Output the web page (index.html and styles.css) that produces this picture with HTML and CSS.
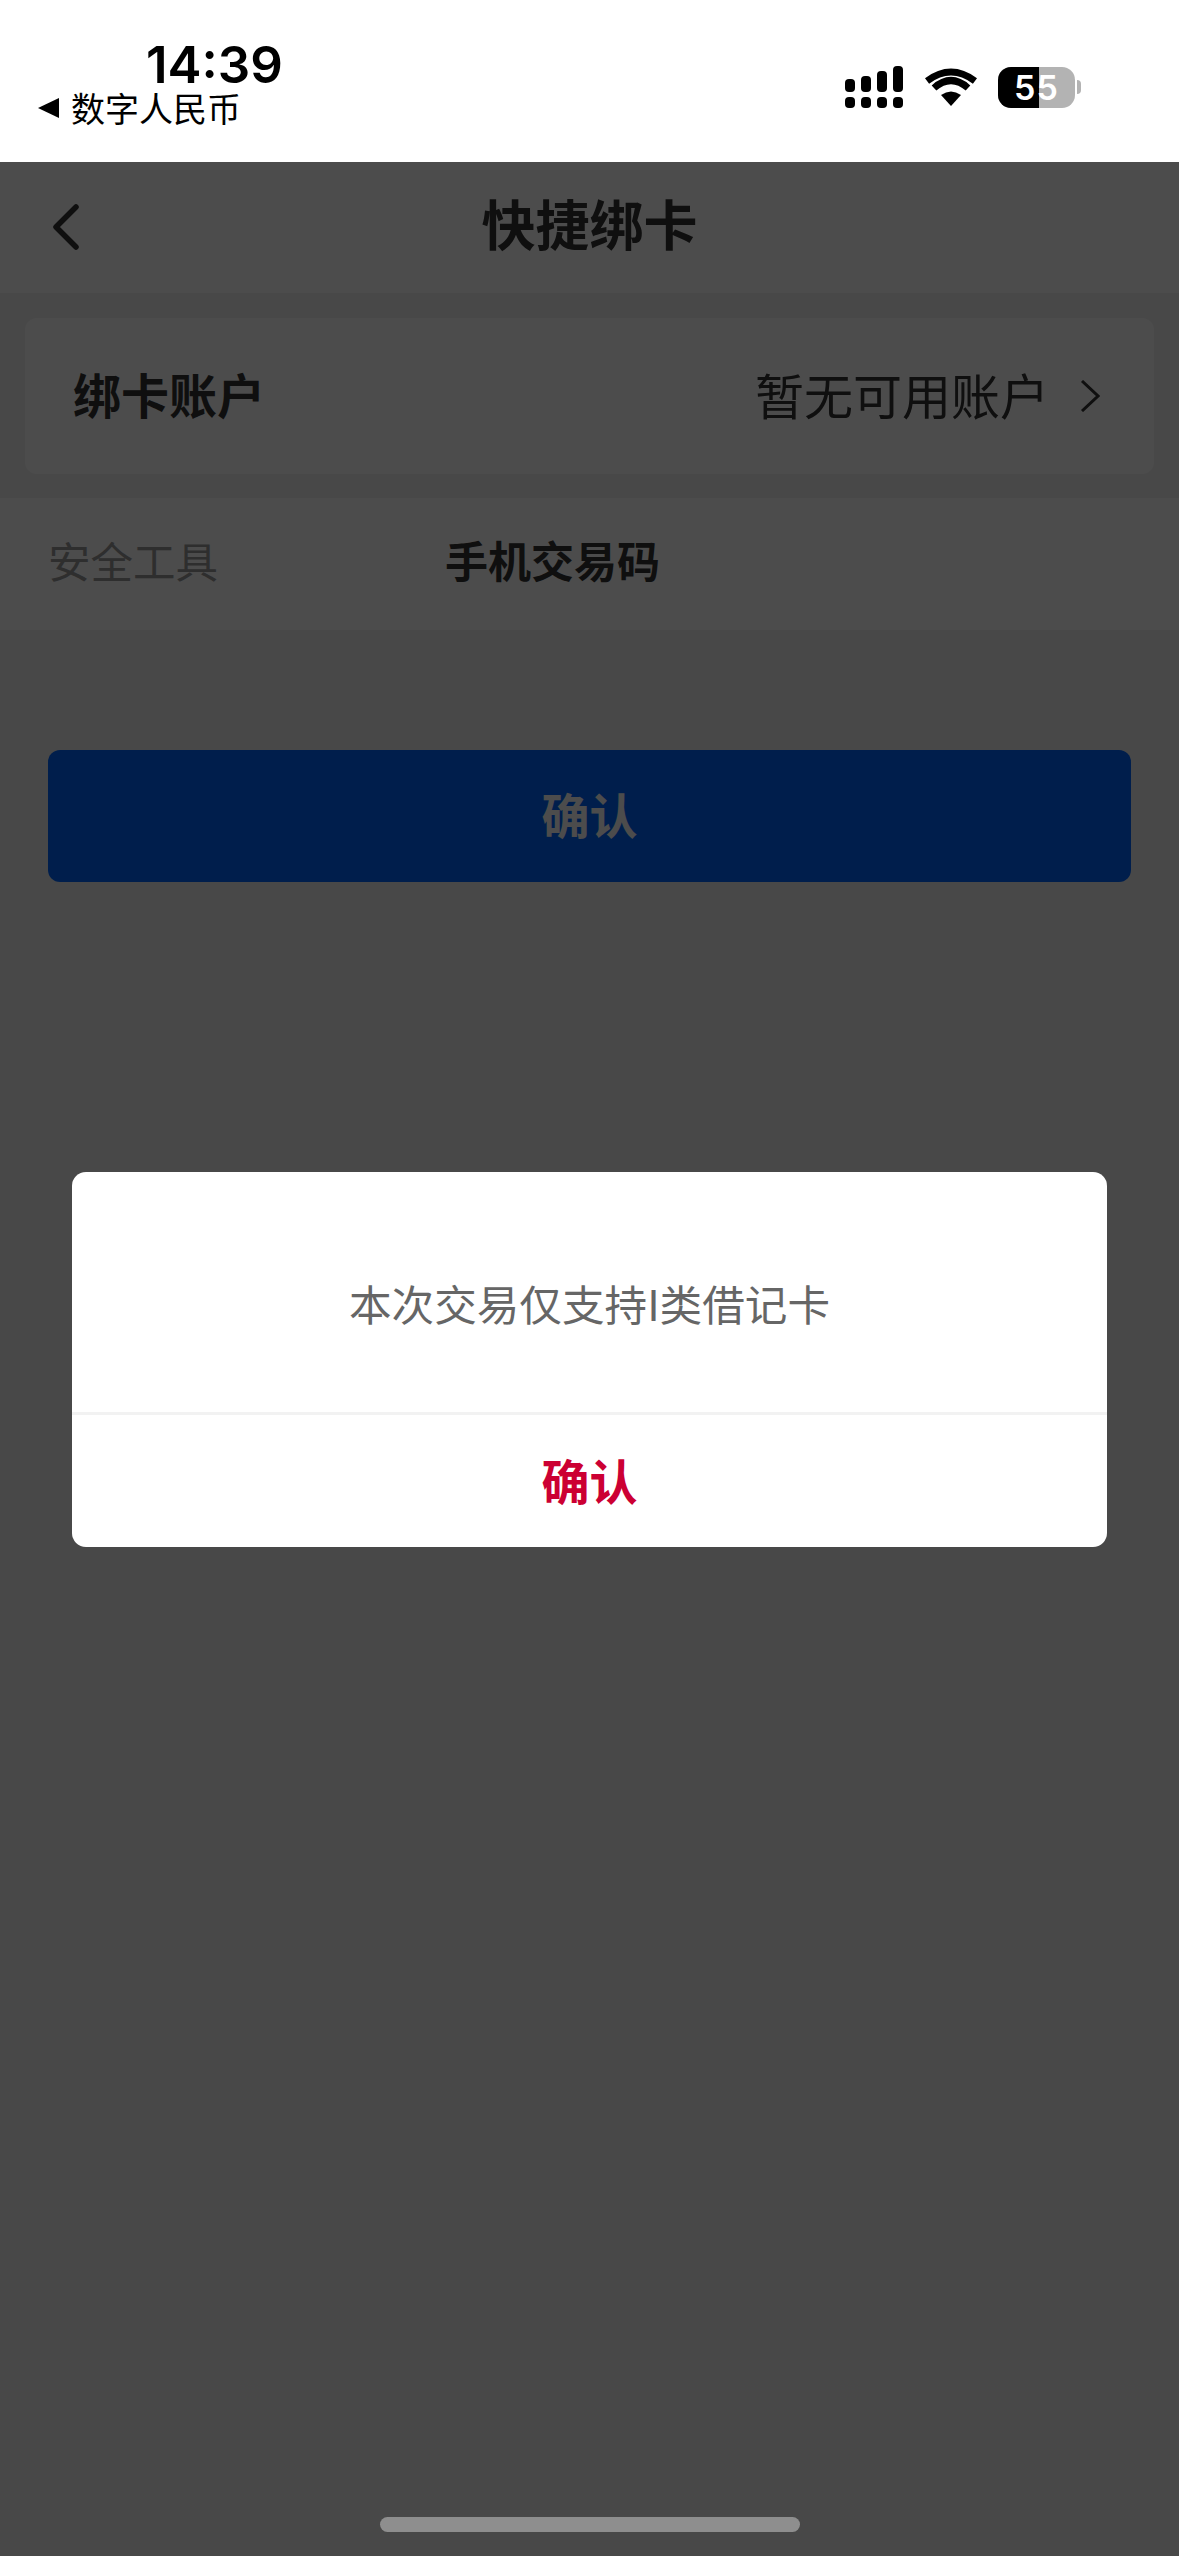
FILE: index.html
```html
<!DOCTYPE html>
<html lang="zh-CN">
<head>
    <meta charset="UTF-8">
    <meta name="viewport" content="width=device-width, initial-scale=1.0">
    <title>快捷绑卡</title>
    <link rel="stylesheet" href="styles.css">
</head>
<body>
    <div class="status-bar">
        <div class="status-left">
            <div class="time">14:39</div>
            <div class="back-app"><span class="back-tri"></span>数字人民币</div>
        </div>
        <div class="status-right">
            <svg class="signal" width="58" height="42" viewBox="0 0 58 42">
                <rect x="0" y="13" width="10" height="13" rx="4"/>
                <rect x="16" y="10" width="10" height="16" rx="4"/>
                <rect x="32" y="5" width="10" height="21" rx="4"/>
                <rect x="48" y="0" width="10" height="26" rx="4"/>
                <rect x="0" y="31" width="10" height="11" rx="4"/>
                <rect x="16" y="31" width="10" height="11" rx="4"/>
                <rect x="32" y="31" width="10" height="11" rx="4"/>
                <rect x="48" y="31" width="10" height="11" rx="4"/>
            </svg>
            <svg class="wifi" width="52" height="38" viewBox="0 0 52 38">
                <path d="M26 38 L16 27 Q26 20 36 27 Z"/>
                <path d="M9 20 Q26 5 43 20" fill="none" stroke="#000" stroke-width="7"/>
                <path d="M2 11 Q26 -7 50 11" fill="none" stroke="#000" stroke-width="7" transform="translate(0 2)"/>
            </svg>
            <div class="battery">
                <div class="battery-body">
                    <span class="battery-fill"></span>
                    <span class="battery-num">55</span>
                </div>
                <span class="battery-nub"></span>
            </div>
        </div>
    </div>

    <div class="page">
        <div class="nav">
            <svg class="nav-back" width="26" height="46" viewBox="0 0 26 46">
                <path d="M23 3 L3 23 L23 43" fill="none" stroke="#333" stroke-width="5.5" stroke-linecap="round" stroke-linejoin="round"/>
            </svg>
            <h1>快捷绑卡</h1>
        </div>
        <div class="section">
            <div class="card">
                <span class="card-label">绑卡账户</span>
                <span class="card-value">暂无可用账户</span>
                <svg class="chevron" width="20" height="32" viewBox="0 0 20 32">
                    <path d="M2 1 L18 16 L2 31" fill="none" stroke="#333" stroke-width="3"/>
                </svg>
            </div>
        </div>
        <div class="tool-row">
            <span class="tool-label">安全工具</span>
            <span class="tool-value">手机交易码</span>
        </div>
        <button class="confirm-btn">确认</button>
    </div>

    <div class="overlay">
        <div class="dialog">
            <div class="dialog-msg">本次交易仅支持I类借记卡</div>
            <div class="dialog-btn">确认</div>
        </div>
    </div>
    <div class="home-bar"></div>
</body>
</html>
```

FILE: styles.css
```css
* {
    box-sizing: border-box;
}
html, body {
    margin: 0;
    padding: 0;
}
body {
    width: 1179px;
    height: 2556px;
    overflow: hidden;
    position: relative;
    background-color: #f2f2f2;
    font-family: "Noto Sans CJK SC", "Noto Sans", sans-serif;
}

/* status bar */
.status-bar {
    height: 162px;
    background-color: #fff;
    display: flex;
    justify-content: space-between;
    padding: 37px 98px 0 38px;
    color: #000;
}
.time {
    font-family: Inter, sans-serif;
    font-size: 51px;
    font-weight: 600;
    line-height: 46px;
    padding-top: 5px;
    margin-left: 108px;
}
.back-app {
    display: flex;
    align-items: center;
    font-size: 34px;
    line-height: 40px;
}
.back-tri {
    width: 0;
    height: 0;
    border-top: 10px solid transparent;
    border-bottom: 10px solid transparent;
    border-right: 21px solid #000;
    margin-right: 12px;
}
.status-right {
    display: flex;
    align-items: center;
    height: 100px;
}
.signal {
    margin-right: 22px;
}
.wifi {
    margin-right: 21px;
}
.battery {
    display: flex;
    align-items: center;
}
.battery-body {
    position: relative;
    width: 77px;
    height: 41px;
    border-radius: 13px;
    background-color: #b3b3b3;
    overflow: hidden;
}
.battery-fill {
    position: absolute;
    left: 0;
    top: 0;
    bottom: 0;
    width: 41px;
    background-color: #000;
}
.battery-num {
    position: absolute;
    left: 0;
    right: 0;
    top: 0;
    text-align: center;
    font-family: Inter, sans-serif;
    font-size: 34px;
    font-weight: 600;
    line-height: 41px;
    color: #fff;
    letter-spacing: 1px;
}
.battery-nub {
    width: 4px;
    height: 14px;
    margin-left: 2px;
    background-color: #b3b3b3;
    border-radius: 0 4px 4px 0;
}

/* page under the dimmer */
.nav {
    position: relative;
    height: 131px;
    background-color: #fff;
    display: flex;
    align-items: center;
    justify-content: center;
    padding-bottom: 10px;
}
.nav-back {
    position: absolute;
    left: 53px;
    top: 42px;
}
.nav h1 {
    margin: 0;
    font-size: 54px;
    font-weight: 700;
    color: #333;
}
.section {
    padding: 25px 25px 24px;
}
.card {
    height: 156px;
    border-radius: 12px;
    background-color: #fff;
    display: flex;
    align-items: center;
    padding: 0 54px 0 48px;
}
.card-label {
    font-size: 48px;
    font-weight: 700;
    color: #333;
    flex: 1;
    padding-bottom: 6px;
}
.card-value {
    font-size: 49px;
    color: #333;
    padding-bottom: 6px;
}
.chevron {
    margin-left: 31px;
}
.tool-row {
    height: 132px;
    background-color: #fff;
    display: flex;
    align-items: center;
    padding: 0 0 10px 48px;
}
.tool-label {
    width: 397px;
    font-size: 42.5px;
    color: #999;
}
.tool-value {
    font-size: 43px;
    font-weight: 700;
    color: #333;
}
.confirm-btn {
    display: block;
    width: 1083px;
    height: 132px;
    margin: 120px 0 0 48px;
    padding: 0 0 6px;
    border: none;
    border-radius: 12px;
    background-color: #0067ff;
    color: #fff;
    font-family: inherit;
    font-size: 48px;
    font-weight: 700;
}

/* modal */
.overlay {
    position: absolute;
    left: 0;
    right: 0;
    top: 162px;
    bottom: 0;
    background-color: rgba(0, 0, 0, 0.7);
}
.dialog {
    position: absolute;
    left: 72px;
    top: 1010px;
    width: 1035px;
    height: 375px;
    border-radius: 14px;
    background-color: #fff;
    display: flex;
    flex-direction: column;
}
.dialog-msg {
    height: 243px;
    display: flex;
    align-items: center;
    justify-content: center;
    padding-top: 20px;
    font-size: 42.6px;
    color: #666;
    border-bottom: 3px solid #f2f2f2;
}
.dialog-btn {
    flex: 1;
    display: flex;
    align-items: center;
    justify-content: center;
    padding-bottom: 4px;
    font-size: 48px;
    font-weight: 700;
    color: #cc0033;
}
.home-bar {
    position: absolute;
    left: 380px;
    top: 2517px;
    width: 420px;
    height: 15px;
    border-radius: 8px;
    background-color: #8e8e8e;
}
```
